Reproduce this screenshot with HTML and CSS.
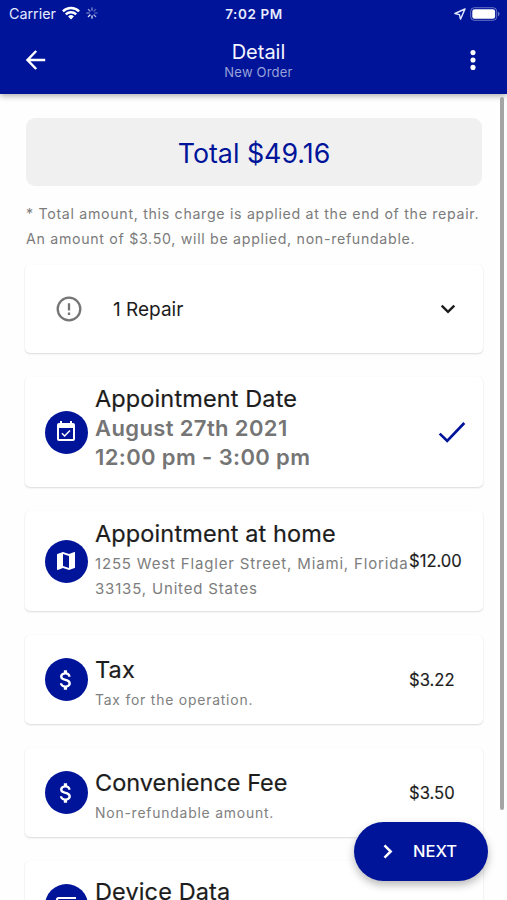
FILE: index.html
```html
<!DOCTYPE html>
<html lang="en">
<head>
<meta charset="utf-8">
<meta name="viewport" content="width=device-width, initial-scale=1">
<title>Detail</title>
<link rel="stylesheet" href="styles.css">
</head>
<body>
<div class="screen">
  <header class="header">
    <div class="status">
      <div class="status-left">
        <span class="carrier">Carrier</span>
        <svg class="wifi" width="18" height="14" viewBox="0 0 18 14" fill="none" stroke="#fff" stroke-width="2.4"><path d="M.9 5.3a11.6 11.6 0 0 1 16.2 0M3.8 8.4a7.4 7.4 0 0 1 10.4 0"/><path d="M9 13.4 6.1 10.5a4.1 4.1 0 0 1 5.8 0z" fill="#fff" stroke="none"/></svg>
        <svg class="spinner" width="12" height="12" viewBox="0 0 12 12" stroke="#fff" stroke-width="1.2" stroke-linecap="round"><path d="M6 .8v2.4" opacity=".55"/><path d="m9.7 2.3-1.7 1.7" opacity=".35"/><path d="M11.2 6H8.8" opacity=".4"/><path d="M9.7 9.7 8 8" opacity=".7"/><path d="M6 11.2V8.8M2.3 9.7 4 8" opacity=".95"/><path d="M.8 6h2.4M2.3 2.3 4 4" opacity=".6"/></svg>
      </div>
      <div class="clock">7:02 PM</div>
      <div class="status-right">
        <svg width="12" height="12" viewBox="0 0 12 12" fill="none" stroke="#e4e8ff" stroke-width="1.4" stroke-linejoin="round"><path d="M11 1 .9 5.5l4.5 1.1 1.1 4.5z"/></svg>
        <svg width="30" height="14" viewBox="0 0 30 14"><rect x=".7" y=".7" width="26" height="12.6" rx="3.6" fill="none" stroke="#fff" stroke-opacity=".4"/><rect x="2.3" y="2.3" width="22.8" height="9.4" rx="2.2" fill="#fff"/><path d="M28 4.8q1.5.6 1.5 2.2T28 9.2z" fill="#fff" opacity=".45"/></svg>
      </div>
    </div>
    <div class="bar">
      <svg class="back" width="20" height="20" viewBox="0 0 20 20" fill="none" stroke="#fff" stroke-width="2.4"><path d="M19.2 10H2M10.200 1 1.500 10l8.700 9"/></svg>
      <div class="heading">
        <h1>Detail</h1>
        <p>New Order</p>
      </div>
      <svg class="more" width="6" height="20" viewBox="0 0 6 20" fill="#fff"><circle cx="3" cy="2.6" r="2.55"/><circle cx="3" cy="10" r="2.55"/><circle cx="3" cy="17.4" r="2.55"/></svg>
    </div>
  </header>
  <main class="content">
    <div class="total">Total $49.16</div>
    <p class="note">* Total amount, this charge is applied at the end of the repair.<br>An amount of $3.50, will be applied, non-refundable.</p>

    <section class="card card-repair">
      <svg class="alert" width="26" height="26" viewBox="0 0 26 26" fill="none" stroke="#757575" stroke-width="2.3"><circle cx="13" cy="13" r="11.3"/><path d="M13 7.2v7.2M13 16.5v2.5"/></svg>
      <span class="repair">1 Repair</span>
      <svg class="chevron" width="16" height="10" viewBox="0 0 16 10" fill="none" stroke="#1c1c1c" stroke-width="2.4"><path d="m1.7 1.6 6.3 6.2 6.3-6.2"/></svg>
    </section>

    <section class="card card-date">
      <div class="badge"><svg width="24" height="24" viewBox="0 0 24 24" fill="#fff"><path d="M16.53 11.06 15.47 10l-4.88 4.88-2.12-2.12-1.06 1.06L10.59 17zM19 3h-1V1h-2v2H8V1H6v2H5a2 2 0 0 0-2 2v14a2 2 0 0 0 2 2h14a2 2 0 0 0 2-2V5a2 2 0 0 0-2-2m0 16H5V8h14z"/></svg></div>
      <div class="info">
        <h2>Appointment Date</h2>
        <p class="when">August 27th 2021<br>12:00 pm - 3:00 pm</p>
      </div>
      <svg class="check" width="28" height="22" viewBox="0 0 28 22" fill="none" stroke="#00149a" stroke-width="2.7"><path d="m1.700 12.600 7.500 7.300L26.300 2"/></svg>
    </section>

    <section class="card card-home">
      <div class="badge"><svg width="24" height="24" viewBox="0 0 24 24" fill="#fff"><path d="m20.5 3-.16.03L15 5.1 9 3 3.36 4.9c-.21.07-.36.25-.36.48V20.5c0 .28.22.5.5.5l.16-.03L9 18.9l6 2.1 5.64-1.9c.21-.07.36-.25.36-.48V3.5c0-.28-.22-.5-.5-.5M15 19l-6-2.11V5l6 2.11z"/></svg></div>
      <div class="info">
        <h2>Appointment at home</h2>
        <p class="address">1255 West Flagler Street, Miami, Florida<br>33135, United States</p>
      </div>
      <span class="price">$12.00</span>
    </section>

    <section class="card card-row">
      <div class="badge"><svg width="26" height="26" viewBox="0 0 24 24" fill="#fff"><path d="M11.8 10.9c-2.27-.59-3-1.2-3-2.15 0-1.09 1.01-1.85 2.7-1.85 1.78 0 2.44.85 2.5 2.1h2.21c-.07-1.72-1.12-3.3-3.21-3.81V3h-3v2.16c-1.94.42-3.5 1.68-3.5 3.61 0 2.31 1.91 3.46 4.7 4.13 2.5.6 3 1.48 3 2.41 0 .69-.49 1.79-2.7 1.79-2.06 0-2.87-.92-2.98-2.1h-2.2c.12 2.19 1.76 3.42 3.68 3.83V21h3v-2.15c1.95-.37 3.5-1.5 3.5-3.55 0-2.84-2.43-3.81-4.7-4.4"/></svg></div>
      <div class="info">
        <h2>Tax</h2>
        <p class="sub">Tax for the operation.</p>
      </div>
      <span class="price">$3.22</span>
    </section>

    <section class="card card-row">
      <div class="badge"><svg width="26" height="26" viewBox="0 0 24 24" fill="#fff"><path d="M11.8 10.9c-2.27-.59-3-1.2-3-2.15 0-1.09 1.01-1.85 2.7-1.85 1.78 0 2.44.85 2.5 2.1h2.21c-.07-1.72-1.12-3.3-3.21-3.81V3h-3v2.16c-1.94.42-3.5 1.68-3.5 3.61 0 2.31 1.91 3.46 4.7 4.13 2.5.6 3 1.48 3 2.41 0 .69-.49 1.79-2.7 1.79-2.06 0-2.87-.92-2.98-2.1h-2.2c.12 2.19 1.76 3.42 3.68 3.83V21h3v-2.15c1.95-.37 3.5-1.5 3.5-3.55 0-2.84-2.43-3.81-4.7-4.4"/></svg></div>
      <div class="info info-fee">
        <h2>Convenience Fee</h2>
        <p class="sub">Non-refundable amount.</p>
      </div>
      <span class="price">$3.50</span>
    </section>

    <section class="card card-row">
      <div class="badge"><svg width="26" height="24" viewBox="0 0 26 24" fill="none" stroke="#fff" stroke-width="2.2"><path d="M23 4H5.500A1.500 1.500 0 0 0 4 5.500V18H1M17 10h7v10h-7z"/></svg></div>
      <div class="info info-device">
        <h2>Device Data</h2>
      </div>
    </section>
  </main>
  <div class="scrollbar"></div>
  <button class="next">
    <svg width="10" height="15" viewBox="0 0 10 15" fill="none" stroke="#fff" stroke-width="2.5"><path d="m1.5 1.3 6.2 6.2-6.2 6.2"/></svg>
    <span>NEXT</span>
  </button>
</div>
</body>
</html>
```
FILE: styles.css
```css
* { box-sizing: border-box; }
body { margin: 0; font-family: Inter, "Liberation Sans", sans-serif; background: #fefefe; }
h1, h2, p { margin: 0; font-weight: 400; }
svg { display: block; flex: none; }

.screen { position: relative; height: 900px; overflow: hidden; color: #1c1c1c; }

.header { position: relative; height: 94px; background: #00149a; color: #fff; box-shadow: 0 2px 6px rgba(0, 0, 0, .32); }
.status { display: grid; grid-template-columns: 1fr auto 1fr; align-items: center; height: 28px; padding: 0 7px 0 9px; }
.status-left { display: flex; align-items: center; }
.carrier { font-size: 14.3px; line-height: 18px; color: #e6eaff; }
.wifi { margin-left: 6px; margin-top: -3px; }
.spinner { margin-left: 6px; margin-top: -2px; }
.clock { font-size: 13.5px; font-weight: 600; line-height: 18px; color: #e8ebff; letter-spacing: .6px; margin-right: 1px; }
.status-right { display: flex; justify-content: flex-end; align-items: center; gap: 4px; margin-top: -1px; }
.bar { display: grid; grid-template-columns: 1fr auto 1fr; align-items: center; height: 64px; padding: 0 31px 0 26px; }
.back { margin-top: -1px; }
.more { justify-self: end; margin-top: -1px; }
.heading { text-align: center; padding-left: 15px; }
.heading h1 { font-size: 20px; line-height: 24px; color: #f4f5ff; margin-top: -1px; }
.heading p { font-size: 13px; line-height: 16px; color: #99a1d7; letter-spacing: .2px; }

.content { display: flex; flex-direction: column; padding: 24px 24px 0 25px; }
.total { height: 68px; margin: 0 1px; border-radius: 9px; background: #f0f0f0; color: #00149a; font-size: 26.8px; line-height: 70px; text-align: center; }
.note { margin: 15px 0 0 1px; height: 64px; font-size: 14.2px; line-height: 25px; color: #7b7b7b; white-space: nowrap; letter-spacing: .69px; }

.card { display: flex; align-items: center; flex: none; border-radius: 5px; background: #fff; box-shadow: 0 1px 2px rgba(0, 0, 0, .14), 0 0 1px rgba(0, 0, 0, .06); padding-left: 20px; white-space: nowrap; }
.card + .card { margin-top: 24px; }
.card-repair { height: 88px; }
.card-date { height: 110px; }
.card-home { height: 100px; }
.card-row { height: 89px; }

.alert { margin-left: 11px; margin-top: -1px; }
.repair { flex: 1; margin-left: 31px; padding-top: 1px; font-size: 19px; line-height: 24px; }
.chevron { margin-right: 27px; }
.badge { display: flex; align-items: center; justify-content: center; flex: none; width: 43px; height: 43px; border-radius: 50%; background: #00149a; margin-right: 7px; }
.badge svg { margin-left: -1px; }
.info { flex: 1; min-width: 0; padding-top: 7px; }
.info h2 { font-size: 23.5px; line-height: 30px; letter-spacing: .12px; -webkit-text-stroke: .2px; }
.card-date .info { padding: 0 0 9px; }
.card-home .info { padding: 0 0 3px; }
.info-fee h2 { letter-spacing: 0; }
.info.info-device { padding: 0 0 28px; }
.when { font-size: 22px; line-height: 29px; font-weight: 600; color: #757575; letter-spacing: .38px; }
.check { margin-right: 17px; }
.address { font-size: 15px; line-height: 25px; color: #7d7d7d; letter-spacing: .83px; margin-top: 2px; }
.sub { font-size: 13.9px; line-height: 22px; color: #808080; letter-spacing: .8px; margin-top: 4px; }
.price { flex: none; width: 74px; font-size: 16.6px; line-height: 22px; -webkit-text-stroke: .15px; }

.scrollbar { position: absolute; top: 97px; right: 3px; width: 4px; height: 713px; border-radius: 2px; background: #a4a4a4; }
.next { position: absolute; left: 354px; top: 822px; display: flex; align-items: center; width: 134px; height: 59px; padding: 0 0 1px 29px; border: 0; border-radius: 30px; background: #00149a; color: #fff; font: 500 16.5px/20px Inter, "Liberation Sans", sans-serif; box-shadow: 0 4px 8px rgba(0, 0, 0, .28); }
.next span { margin-left: 20px; }
```
